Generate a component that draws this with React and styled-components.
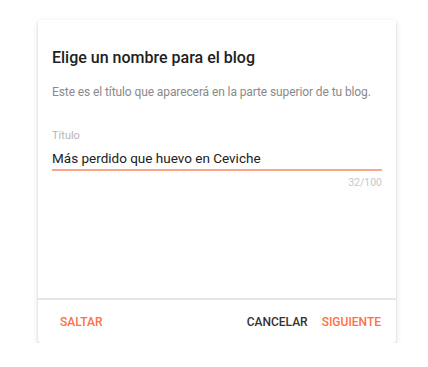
import React from 'react';
import styled, { createGlobalStyle } from 'styled-components';

const GlobalStyle = createGlobalStyle`
    body {
        margin: 0;
        background: #fff;
        font-family: Roboto, 'Liberation Sans', sans-serif;
    }
`;

const Page = styled.div`
    padding: 20px 0 0 38px;
`;

const Dialog = styled.div`
    width: 358px;
    background: #fff;
    border-radius: 3px;
    box-shadow: 0 1px 2px rgba(0,0,0,0.14), 0 2px 6px rgba(0,0,0,0.12);
`;

const DialogBody = styled.div`
    height: 278px;
    box-sizing: border-box;
    padding: 28px 14px 0;
    display: flex;
    flex-direction: column;
`;

const Title = styled.h2`
    margin: 0;
    font-size: 16px;
    line-height: 20px;
    font-weight: 500;
    color: #212121;
`;

const Hint = styled.p`
    margin: 13.5px 0 0;
    font-size: 12px;
    line-height: 20px;
    letter-spacing: -0.1px;
    color: #8a8a8a;
    white-space: nowrap;
`;

const FieldLabel = styled.label`
    display: block;
    margin-top: 27.5px;
    font-size: 11px;
    line-height: 14px;
    color: #b5b5b5;
`;

const TextField = styled.input`
    display: block;
    width: 100%;
    box-sizing: border-box;
    margin-top: 5px;
    height: 23px;
    padding: 0 0 1px;
    border: none;
    border-bottom: 2px solid #f9a68a;
    outline: none;
    font-family: Roboto, 'Liberation Sans', sans-serif;
    font-size: 13.5px;
    line-height: 20px;
    color: #212121;
    background: transparent;
`;

const Counter = styled.div`
    margin-top: 4.5px;
    text-align: right;
    font-size: 10.5px;
    line-height: 14px;
    color: #c8c8c8;
`;

const Footer = styled.div`
    border-top: 2px solid #e6e6e6;
    height: 43px;
    display: flex;
    align-items: center;
    padding: 0 8px 0 15px;
`;

const Spacer = styled.div`
    flex: 1;
`;

const ActionButton = styled.button`
    border: none;
    background: none;
    padding: 0 7px;
    height: 36px;
    line-height: 36px;
    font-family: Roboto, 'Liberation Sans', sans-serif;
    font-size: 12px;
    font-weight: 500;
    text-transform: uppercase;
    color: ${props => props.primary ? '#ff7043' : '#333'};
    cursor: pointer;
`;

const App = () => {
    return (
        <Page>
            <GlobalStyle />
            <Dialog>
                <DialogBody>
                    <Title>Elige un nombre para el blog</Title>
                    <Hint>Este es el título que aparecerá en la parte superior de tu blog.</Hint>
                    <FieldLabel htmlFor="blog-title">Título</FieldLabel>
                    <TextField id="blog-title" defaultValue="Más perdido que huevo en Ceviche" />
                    <Counter>32/100</Counter>
                </DialogBody>
                <Footer>
                    <ActionButton primary>Saltar</ActionButton>
                    <Spacer />
                    <ActionButton>Cancelar</ActionButton>
                    <ActionButton primary>Siguiente</ActionButton>
                </Footer>
            </Dialog>
        </Page>
    );
}

export default App;
